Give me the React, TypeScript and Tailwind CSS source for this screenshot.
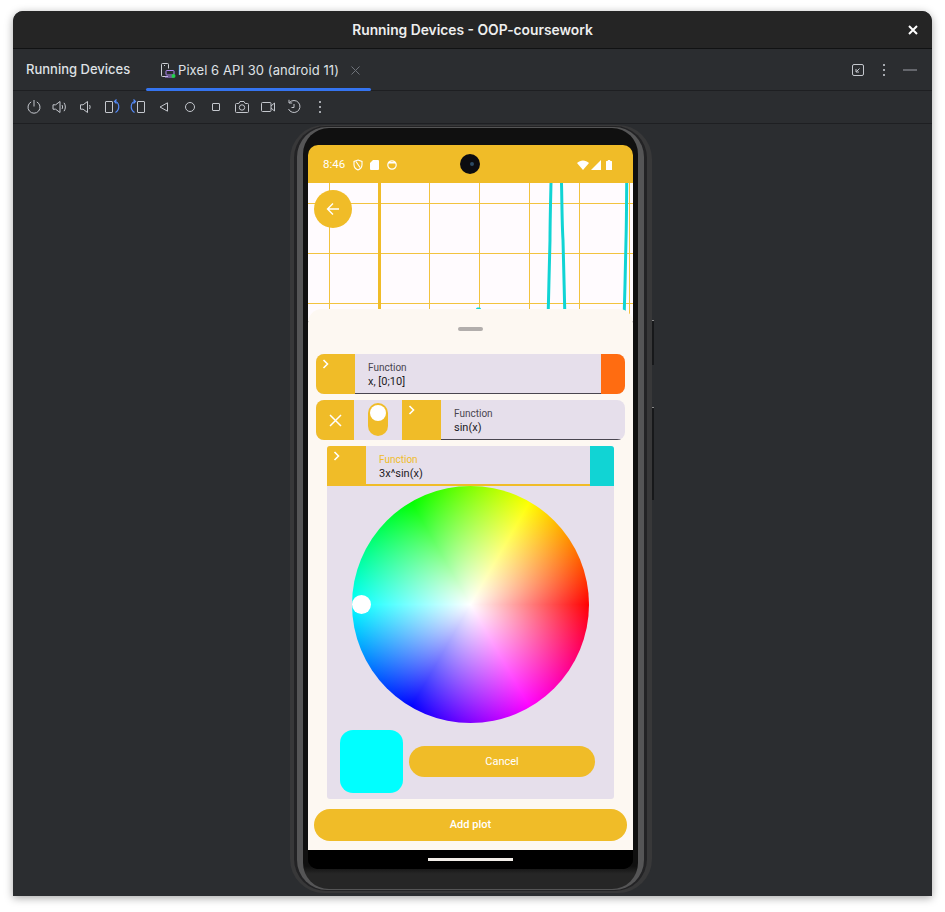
const S = "#c4c7cd";
const B = "#548af7";

function Ic({ children, w = 16, h = 16 }: { children: React.ReactNode; w?: number; h?: number }) {
  return (
    <svg width={w} height={h} viewBox={`0 0 ${w} ${h}`} fill="none" stroke={S} strokeWidth="1">
      {children}
    </svg>
  );
}

const toolbar = [
  <Ic key="power"><path d="M5.2 2.9A6 6 0 1 0 10.8 2.9" /><path d="M8 1v6.5" /></Ic>,
  <Ic key="volup"><path d="M1 5.800h2.600L8 2.500v11L3.600 10.200H1z" /><path d="M10 6c.8 1.200.8 2.800 0 4" /><path d="M12 3.800c1.800 2.500 1.800 5.900 0 8.400" /></Ic>,
  <Ic key="voldn"><path d="M2.500 5.800h2.600L9.500 2.500v11L5.100 10.200H2.500z" /><path d="M11.500 6c.8 1.200.8 2.800 0 4" /></Ic>,
  <Ic key="rotr"><rect x="1.500" y="2.500" width="7" height="11" rx=".5" /><path d="M4 2.500h1" /><path d="M10.500 2.500C15 2.500 16.800 10 11.500 13.500" stroke={B} strokeWidth="1.200" /><path d="M12.500 .500L10.500 2.500l2 2" stroke={B} strokeWidth="1.200" /></Ic>,
  <Ic key="rotl"><rect x="7.500" y="2.500" width="7" height="11" rx=".5" /><path d="M10.500 2.500h1" /><path d="M5.500 2.500C1 2.500-.8 10 4.500 13.500" stroke={B} strokeWidth="1.200" /><path d="M3.500 .500L5.500 2.500l-2 2" stroke={B} strokeWidth="1.200" /></Ic>,
  <Ic key="back"><path d="M11.500 3.800v8.400L4 8z" /></Ic>,
  <Ic key="home"><circle cx="8" cy="8" r="4.500" /></Ic>,
  <Ic key="sq"><rect x="4.500" y="4.500" width="7" height="7" rx=".5" /></Ic>,
  <Ic key="cam"><path d="M1.500 5.500a1 1 0 0 1 1-1h2.300l1.200-2h4l1.200 2h2.300a1 1 0 0 1 1 1v7a1 1 0 0 1-1 1h-11a1 1 0 0 1-1-1z" /><circle cx="8" cy="8.500" r="2.700" /></Ic>,
  <Ic key="vid"><rect x="1.500" y="3.500" width="9.500" height="9" rx="1" /><path d="M11 7l3.500-3v8L11 9" /></Ic>,
  <Ic key="hist"><path d="M3.500 3.500A6 6 0 1 1 2.500 10" /><path d="M3 .800v3.200h3.200" /><path d="M8 5v3.500H5.500" /></Ic>,
  <Dots key="dots" />,
];

function Dots() {
  return (
    <svg width="16" height="16" viewBox="0 0 16 16" fill={S}>
      <circle cx="8" cy="3" r="1.100" />
      <circle cx="8" cy="8" r="1.100" />
      <circle cx="8" cy="13" r="1.100" />
    </svg>
  );
}

function Chevron() {
  return (
    <svg className="ml-[6px] mt-[5px]" width="8" height="10" viewBox="0 0 8 10" fill="none" stroke="#fff" strokeWidth="1.600">
      <path d="M1.500 1l4 4-4 4" />
    </svg>
  );
}

function Field({ label, value, active }: { label: string; value: string; active?: boolean }) {
  return (
    <div className={`flex-1 flex flex-col justify-end pl-[13px] ${active ? "pb-[3px] border-b-2 border-[#f0bc28]" : "pb-[4px] border-b border-[#49454f]"}`}>
      <span className={`text-[10px] leading-[14px] ${active ? "text-[#f0bc28]" : "text-[#49454f]"}`}>{label}</span>
      <span className="text-[11px] leading-[14px] text-[#1c1b1f]">{value}</span>
    </div>
  );
}

function Plot() {
  const xs = [329.5, 429.5, 479.5, 529.5, 579.5, 629.5];
  const ys = [203.5, 253.5, 303.5];
  return (
    <svg className="absolute inset-0" width="325" height="138" viewBox="308 183 325 138">
      {xs.map((x) => <path key={x} d={`M${x} 183V321`} stroke="#f2c33f" strokeWidth="1" />)}
      {ys.map((y) => <path key={y} d={`M308 ${y}H633`} stroke="#f2c33f" strokeWidth="1" />)}
      <path d="M379.5 183V321" stroke="#f0bc28" strokeWidth="3" />
      <g fill="none" stroke="#11d4d4" strokeWidth="3">
        <path d="M551 183C550.500 205 550 225 550 240C549.500 265 548.500 295 548 321" />
        <path d="M561.500 183C562 205 562 225 563 240C563.500 265 564.500 295 565 321" />
        <path d="M626.700 183C626.500 205 626.500 225 626 240C625.500 265 624.800 295 624 321" />
      </g>
      <rect x="476" y="307.500" width="5" height="6" fill="#11d4d4" rx="1.500" />
    </svg>
  );
}

function Phone() {
  return (
    <div className="relative w-[362px] h-[768px] rounded-[34px] bg-[#383839] pl-[4px] pr-[5px] pt-[1px] pb-[2px]">
      <div className="absolute right-[-2px] top-[195px] w-[2px] h-[45px] bg-[#17181a] border-t border-[#888888]" />
      <div className="absolute right-[-2px] top-[282px] w-[2px] h-[93px] bg-[#17181a] border-t border-[#888888]" />
      <div className="w-full h-full rounded-[32px] bg-[#232325] px-[3px] py-[1px]">
        <div className="w-full h-full rounded-[30px] bg-[#555556] py-[1px] px-[6px]">
          <div className="w-full h-full rounded-[26px] bg-[linear-gradient(#101010_97%,#262626_98%)] pt-[17px] pb-[15px] px-[5px]">
            <Screen />
          </div>
        </div>
      </div>
    </div>
  );
}

function Screen() {
  return (
    <div className="w-[325px] h-[724px] rounded-[10px] overflow-hidden bg-black flex flex-col [font-family:Roboto,sans-serif]">
      {/* status bar */}
      <div className="relative h-[38px] shrink-0 bg-[#f0bc28] flex items-center pt-[2px] pl-[15px] pr-[21px] text-white">
        <span className="text-[11.500px] leading-none w-[30px]">8:46</span>
        <svg width="10" height="12" viewBox="0 0 10 12" fill="none" stroke="#fff" strokeWidth="1.100">
          <path d="M5 1l4 1.500v3.200c0 2.500-1.700 4.300-4 5.200-2.300-.9-4-2.700-4-5.200V2.500z" />
          <path d="M3 2.500l4 6" />
        </svg>
        <svg className="ml-[7px]" width="9" height="10" viewBox="0 0 9 10" fill="#fff">
          <path d="M3 0h5a1 1 0 0 1 1 1v8a1 1 0 0 1-1 1H1a1 1 0 0 1-1-1V3z" />
        </svg>
        <svg className="ml-[8px]" width="10" height="10" viewBox="0 0 10 10" fill="none" stroke="#fff" strokeWidth="1.200">
          <circle cx="5" cy="5" r="4.200" />
          <path d="M1.500 2.800h7" strokeWidth="1.500" />
        </svg>
        <div className="absolute left-[152px] top-[9px] w-[20px] h-[20px] rounded-full bg-[#0c0c10] flex items-center justify-center">
          <div className="ml-[3px] w-[4px] h-[4px] rounded-full bg-[#2c4a63]" />
        </div>
        <div className="ml-auto flex items-center gap-[2px]">
          <svg width="12" height="10" viewBox="0 0 12 10" fill="#fff"><path d="M0 3c3.400-3.500 8.600-3.500 12 0L6 10z" /></svg>
          <svg width="10" height="10" viewBox="0 0 10 10" fill="#fff"><path d="M10 0v10H0z" /></svg>
          <svg className="ml-[3px]" width="6" height="10" viewBox="0 0 6 10" fill="#fff"><path d="M1.800 0h2.400v1H5.500a.5.500 0 0 1 .5.500V10H0V1.500A.5.500 0 0 1 .5 1h1.300z" /></svg>
        </div>
      </div>

      {/* plot */}
      <div className="relative h-[138px] shrink-0 bg-[#fffbfe]">
        <Plot />
        <div className="absolute left-[6px] top-[7px] w-[38px] h-[38px] rounded-full bg-[#f0bc28] flex items-center justify-center">
          <svg width="14" height="14" viewBox="0 0 14 14" fill="none" stroke="#fff" strokeWidth="1.400">
            <path d="M13 7H1.500M7 1.500L1.500 7 7 12.500" />
          </svg>
        </div>
      </div>

      {/* sheet */}
      <div className="relative -mt-[12px] h-[541px] shrink-0 rounded-t-[14px] bg-[#fdf8f2] flex flex-col">
        <div className="mt-[18px] mx-auto w-[25px] h-[4px] rounded-full bg-[#b2aeac]" />
        <div className="mt-[23px] mx-[8px] h-[40px] rounded-[8px] overflow-hidden flex bg-[#e6dfeb]">
          <div className="w-[39px] bg-[#f0bc28]"><Chevron /></div>
          <Field label="Function" value="x, [0;10]" />
          <div className="w-[24px] bg-[#ff6c11]" />
        </div>
        <div className="mt-[6px] mx-[8px] h-[40px] rounded-[8px] overflow-hidden flex bg-[#e6dfeb]">
          <div className="w-[38px] bg-[#f0bc28] flex items-center justify-center">
            <svg width="13" height="13" viewBox="0 0 13 13" stroke="#fff" strokeWidth="1.500"><path d="M1 1l11 11M12 1L1 12" /></svg>
          </div>
          <div className="w-[48px] flex justify-center pt-[3px]">
            <div className="w-[20px] h-[33px] rounded-full bg-[#f0bc28] flex justify-center pt-[2px]">
              <div className="w-[16px] h-[16px] rounded-full bg-white" />
            </div>
          </div>
          <div className="w-[39px] bg-[#f0bc28]"><Chevron /></div>
          <Field label="Function" value="sin(x)" />
        </div>
        <div className="mt-[6px] mx-[19px] h-[353px] rounded-[3px] overflow-hidden bg-[#e6dfeb] flex flex-col">
          <div className="h-[40px] shrink-0 flex">
            <div className="w-[39px] bg-[#f0bc28]"><Chevron /></div>
            <Field active label="Function" value="3x^sin(x)" />
            <div className="w-[24px] bg-[#11d4d4]" />
          </div>
          <div className="relative mx-auto w-[237px] h-[237px] rounded-full bg-[conic-gradient(from_90deg,#f00,#f0f,#00f,#0ff,#0f0,#ff0,#f00)]">
            <div className="absolute inset-0 rounded-full bg-[radial-gradient(closest-side,#fff,rgba(255,255,255,0))]" />
            <div className="absolute left-0 top-[109px] w-[19px] h-[19px] rounded-full bg-white" />
          </div>
          <div className="mt-[7px] ml-[13px] flex items-center gap-[6px]">
            <div className="w-[63px] h-[63px] rounded-[13px] bg-[#0ff]" />
            <div className="w-[186px] h-[31px] pt-px rounded-full bg-[#f0bc28] flex items-center justify-center text-white text-[11px]">Cancel</div>
          </div>
        </div>
        <div className="mt-[10px] mx-[6px] h-[32px] pt-px rounded-full bg-[#f0bc28] flex items-center justify-center text-white text-[11px] font-medium">Add plot</div>
      </div>

      {/* nav */}
      <div className="flex-1 flex items-start justify-center pt-[8px] bg-black">
        <div className="w-[85px] h-[3px] bg-[#f2eee9]" />
      </div>
    </div>
  );
}

export default function App() {
  return (
    <div className="min-h-[912px] bg-white pt-[11px] pl-[13px] [font-family:Inter,sans-serif]">
      <div className="w-[919px] h-[885px] rounded-t-[10px] overflow-hidden bg-[#2b2d30] shadow-[0_2px_8px_rgba(0,0,0,0.35)] flex flex-col">
        <div className="relative h-[38px] shrink-0 bg-[#252525] border-b border-[#111213] pt-px flex items-center justify-center">
          <span className="text-[13.800px] font-semibold text-[#eeeeee]">Running Devices - OOP-coursework</span>
          <svg className="absolute right-[14px] top-[14px]" width="10" height="10" viewBox="0 0 10 10" stroke="#fff" strokeWidth="2"><path d="M1 1l8 8M9 1L1 9" /></svg>
        </div>
        <div className="h-[42px] shrink-0 border-b border-[#1e1f22] flex items-center pl-[13px] pr-[14px]">
          <span className="w-[120px] pt-px text-[13px] font-medium text-[#dfe1e5]">Running Devices</span>
          <div className="relative h-full -mb-px w-[225px] flex items-center pl-[14px]">
            <svg width="16" height="16" viewBox="0 0 16 16" fill="none" stroke="#ced0d6" strokeWidth="1">
              <path d="M8 14.500H2.500a1 1 0 0 1-1-1v-11a1 1 0 0 1 1-1h5a1 1 0 0 1 1 1v4" />
              <path d="M4 3.500h1" />
              <rect x="6" y="8.500" width="8" height="4.500" rx=".8" stroke="#b189f5" />
              <path d="M5 15h8" stroke="#b189f5" />
              <circle cx="13.500" cy="14" r="2" fill="#21d24a" stroke="none" />
            </svg>
            <span className="ml-[2px] pt-px text-[13px] tracking-[0.08px] text-[#dfe1e5] whitespace-nowrap">Pixel 6 API 30 (android 11)</span>
            <svg className="ml-[12px]" width="9" height="9" viewBox="0 0 9 9" stroke="#6f737a" strokeWidth="1"><path d="M.5.500l8 8M8.500.500l-8 8" /></svg>
            <div className="absolute left-0 right-0 bottom-0 h-[3px] rounded-full bg-[#3574f0]" />
          </div>
          <div className="ml-auto flex items-center gap-[10px]">
            <svg width="16" height="16" viewBox="0 0 16 16" fill="none" stroke={S} strokeWidth="1">
              <rect x="2.500" y="2.500" width="11" height="11" rx="1.500" />
              <path d="M9.500 6.500L6 10M6 7v3h3" />
            </svg>
            <Dots />
            <svg width="16" height="16" viewBox="0 0 16 16" stroke="#9da0a8" strokeWidth="1.200"><path d="M1 8h14" /></svg>
          </div>
        </div>
        <div className="h-[33px] shrink-0 border-b border-[#1e1f22] flex items-center pl-[8px]">
          {toolbar.map((icon, i) => (
            <div key={i} className="w-[26px] flex justify-center">{icon}</div>
          ))}
        </div>
        <div className="flex-1 pt-px pl-[277px]">
          <Phone />
        </div>
      </div>
    </div>
  );
}
